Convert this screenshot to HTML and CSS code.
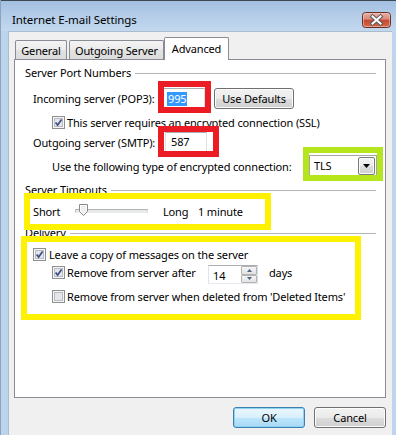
FILE: index.html
```html
<!DOCTYPE html>
<html>
<head>
<meta charset="utf-8">
<title>Internet E-mail Settings</title>
<link rel="stylesheet" href="styles.css">
</head>
<body>
<div class="window">
  <div class="titlebar">
    <span class="title">Internet E-mail Settings</span>
    <span class="close">
      <svg width="29" height="16" viewBox="0 0 29 16">
        <defs>
          <linearGradient id="closeg" x1="0" y1="0" x2="0" y2="1">
            <stop offset="0" stop-color="#e9b1a6"/>
            <stop offset="0.45" stop-color="#d98a7b"/>
            <stop offset="0.5" stop-color="#c4472f"/>
            <stop offset="1" stop-color="#d36a4d"/>
          </linearGradient>
        </defs>
        <rect x="0.5" y="0.5" width="28" height="15" rx="3" fill="url(#closeg)" stroke="#6a2e25"/>
        <rect x="1.5" y="1.5" width="26" height="13" rx="2" fill="none" stroke="#f3cfc6" stroke-opacity="0.55"/>
        <path d="M10.5 4.5 L18.5 11.5 M18.5 4.5 L10.5 11.5" stroke="#5a5a5a" stroke-width="4" stroke-linecap="square"/>
        <path d="M10.5 4.5 L18.5 11.5 M18.5 4.5 L10.5 11.5" stroke="#ffffff" stroke-width="2" stroke-linecap="square"/>
      </svg>
    </span>
  </div>
  <div class="client">
    <div class="tabs">
      <div class="tab t-general">General</div>
      <div class="tab t-outgoing">Outgoing Server</div>
      <div class="tab t-advanced">Advanced</div>
    </div>
    <div class="panel">
      <div class="group">Server Port Numbers</div>
      <div class="row r-in">
        <span class="lbl lbl-in">Incoming server (POP3):</span>
        <span class="edit e-in"><span class="sel">995</span></span>
        <span class="btn b-defaults">Use Defaults</span>
      </div>
      <div class="row r-ssl">
        <span class="chk">
          <svg width="13" height="13" viewBox="0 0 13 13"><rect x="0.5" y="0.5" width="12" height="12" fill="#f6f6f6" stroke="#8e8f8f"/><rect x="2.5" y="2.5" width="8" height="8" fill="#e4e6e9" stroke="#b9bdc3"/><path d="M3.6 6.4 L5.6 9 L9.6 3.4" stroke="#3d4f86" stroke-width="1.7" fill="none"/></svg>
        </span>
        <span class="txt">This server requires an encrypted connection (SSL)</span>
      </div>
      <div class="row r-out">
        <span class="lbl lbl-out">Outgoing server (SMTP):</span>
        <span class="edit e-out">587</span>
      </div>
      <div class="row r-enc">
        <span class="lbl lbl-enc">Use the following type of encrypted connection:</span>
        <span class="combo">
          <span class="combo-val">TLS</span>
          <span class="combo-btn">
            <svg width="7" height="4" viewBox="0 0 7 4"><path d="M0 0 H7 L3.5 4 Z" fill="#000"/></svg>
          </span>
        </span>
      </div>
      <div class="group g-time">Server Timeouts</div>
      <div class="row r-time">
        <span class="lbl lbl-short">Short</span>
        <span class="slider">
          <span class="track"></span>
          <span class="thumb">
            <svg width="9" height="12" viewBox="0 0 9 12"><path d="M0.5 0.5 H8.5 V7.5 L4.5 11.5 L0.5 7.5 Z" fill="#eeeeee" stroke="#8a8a8a"/><path d="M1.5 1.5 H7.5 V7 L4.5 10 L1.5 7 Z" fill="none" stroke="#ffffff"/></svg>
          </span>
        </span>
        <span class="lbl lbl-long">Long</span>
        <span class="txt">1 minute</span>
      </div>
      <div class="group g-deliv">Delivery</div>
      <div class="row r-leave">
        <span class="chk">
          <svg width="13" height="13" viewBox="0 0 13 13"><rect x="0.5" y="0.5" width="12" height="12" fill="#f6f6f6" stroke="#8e8f8f"/><rect x="2.5" y="2.5" width="8" height="8" fill="#e4e6e9" stroke="#b9bdc3"/><path d="M3.6 6.4 L5.6 9 L9.6 3.4" stroke="#3d4f86" stroke-width="1.7" fill="none"/></svg>
        </span>
        <span class="txt t-leave">Leave a copy of messages on the server</span>
      </div>
      <div class="row r-after">
        <span class="chk">
          <svg width="13" height="13" viewBox="0 0 13 13"><rect x="0.5" y="0.5" width="12" height="12" fill="#f6f6f6" stroke="#8e8f8f"/><rect x="2.5" y="2.5" width="8" height="8" fill="#e4e6e9" stroke="#b9bdc3"/><path d="M3.6 6.4 L5.6 9 L9.6 3.4" stroke="#3d4f86" stroke-width="1.7" fill="none"/></svg>
        </span>
        <span class="txt t-after">Remove from server after</span>
        <span class="spin">
          <span class="spin-val">14</span>
          <span class="spin-btns">
            <span class="spin-btn"><svg width="5" height="3" viewBox="0 0 5 3"><path d="M0 3 H5 L2.5 0 Z" fill="#4f6289"/></svg></span>
            <span class="spin-btn"><svg width="5" height="3" viewBox="0 0 5 3"><path d="M0 0 H5 L2.5 3 Z" fill="#4f6289"/></svg></span>
          </span>
        </span>
        <span class="txt t-days">days</span>
      </div>
      <div class="row r-del">
        <span class="chk">
          <svg width="13" height="13" viewBox="0 0 13 13"><rect x="0.5" y="0.5" width="12" height="12" fill="#f6f6f6" stroke="#8e8f8f"/><rect x="2.5" y="2.5" width="8" height="8" fill="#e4e6e9" stroke="#b9bdc3"/></svg>
        </span>
        <span class="txt">Remove from server when deleted from 'Deleted Items'</span>
      </div>
    </div>
    <div class="footer">
      <span class="btn b-ok">OK</span>
      <span class="btn b-cancel">Cancel</span>
    </div>
  </div>
  <div class="mark red m-red1"></div>
  <div class="mark red m-red2"></div>
  <div class="mark green m-green"></div>
  <div class="mark yellow m-yellow1"></div>
  <div class="mark yellow m-yellow2"></div>
</div>
</body>
</html>
```

FILE: styles.css
```css
* { box-sizing: border-box; }

html, body {
  margin: 0;
  padding: 0;
}

body {
  width: 396px;
  height: 435px;
  overflow: hidden;
  font-family: "Noto Sans", "Open Sans", sans-serif;
  font-size: 11px;
  letter-spacing: -0.15px;
  color: #000;
  background: #c4d9ef;
}

.window {
  position: relative;
  width: 396px;
  height: 435px;
  display: flex;
  flex-direction: column;
  background: linear-gradient(to right, #bcd3ec, #c8dcf1 60%, #bfd5ee);
  border-left: 1px solid #8ea3bb;
}

/* ---------- title bar ---------- */
.titlebar {
  height: 31px;
  flex: none;
  display: flex;
  align-items: flex-start;
  border-top: 1px solid #3e4754;
  background: linear-gradient(to bottom, #a3c0e2 0%, #b6cee9 55%, #c3d8ef 100%);
}

.title {
  margin-top: 11px;
  padding-left: 11px;
  line-height: 16px;
  font-size: 11.5px;
  letter-spacing: -0.1px;
  color: #000;
}

.close {
  margin-left: auto;
  margin-right: 5px;
  margin-top: 11px;
  width: 29px;
  height: 16px;
  display: block;
}
.close svg { display: block; }

/* ---------- client ---------- */
.client {
  flex: 1;
  margin-left: 7px;
  margin-right: 4px;
  background: #f0f0f0;
  border-left: 1px solid #a9bcd0;
  border-top: 1px solid #a9bcd0;
  padding: 5px 6px 0 5px;
  display: flex;
  flex-direction: column;
}

.tabs {
  height: 22px;
  flex: none;
  display: flex;
  align-items: flex-end;
  padding-left: 1px;
  position: relative;
  z-index: 1;
}

.tab {
  height: 19px;
  display: flex;
  align-items: center;
  justify-content: center;
  border: 1px solid #898c95;
  border-bottom: none;
  border-radius: 2px 2px 0 0;
  background: linear-gradient(to bottom, #f3f3f3 0%, #ebebeb 50%, #e2e2e2 51%, #dcdcdc 100%);
  line-height: 15px;
}

.t-general { width: 52px; margin-right: 2px; }
.t-outgoing { width: 95px; margin-right: 0; }
.t-advanced {
  width: 65px;
  height: 23px;
  margin-bottom: -1px;
  background: #ffffff;
  padding-bottom: 2px;
}

.panel {
  height: 339px;
  flex: none;
  border: 1px solid #898c95;
  background: #ffffff;
  padding-top: 6px;
}

.group {
  display: flex;
  align-items: center;
  height: 14px;
  line-height: 14px;
  padding-left: 10px;
  padding-right: 9px;
  white-space: nowrap;
}
.group::after {
  content: "";
  flex: 1;
  height: 1px;
  margin-left: 4px;
  background: #b4b4b4;
}
.g-time { margin-top: 6px; }
.g-deliv { margin-top: 7px; }

.row {
  display: flex;
  align-items: center;
  white-space: nowrap;
}

.lbl, .txt { line-height: 15px; }

.chk { width: 13px; height: 13px; flex: none; display: block; }
.chk svg { display: block; }

/* incoming */
.r-in { margin-top: 8px; height: 21px; padding-left: 18px; }
.lbl-in { width: 130px; }
.edit {
  height: 21px;
  width: 42px;
  border: 1px solid;
  border-color: #abadb3 #dbdfe6 #e3e9ef #e2e3ea;
  background: #fff;
  display: flex;
  align-items: center;
  line-height: 14px;
}
.e-in { padding-left: 3px; }
.sel {
  background: #3399ff;
  color: #fff;
  padding: 0 1px;
}
.b-defaults {
  margin-left: 9px;
  width: 80px;
  height: 21px;
}

/* ssl */
.r-ssl { margin-top: 7px; height: 13px; padding-left: 37px; }
.r-ssl .txt { margin-left: 2px; }

/* outgoing */
.r-out { margin-top: 3px; height: 20px; padding-left: 18px; }
.lbl-out { width: 132px; }
.e-out { height: 20px; padding-left: 5px; }

/* encryption */
.r-enc { margin-top: 3px; height: 22px; padding-left: 37px; }
.lbl-enc { width: 257px; }
.combo {
  width: 68px;
  height: 22px;
  border: 1px solid #a5a5a5;
  background: #fff;
  display: flex;
  align-items: center;
  padding-left: 4px;
  padding-right: 1px;
}
.combo-val { line-height: 14px; }
.combo-btn {
  margin-left: auto;
  width: 17px;
  height: 18px;
  border: 1px solid #7b7b7b;
  border-radius: 2px;
  background: linear-gradient(to bottom, #f2f2f2 0%, #ebebeb 50%, #dddddd 51%, #cfcfcf 100%);
  box-shadow: inset 0 0 0 1px #fafafa;
  display: flex;
  align-items: center;
  justify-content: center;
}
.combo-btn svg { display: block; }

/* timeout */
.r-time { margin-top: 6px; height: 16px; padding-left: 18px; }
.lbl-short { width: 42px; }
.slider {
  position: relative;
  width: 73px;
  height: 16px;
  margin-right: 15px;
  display: flex;
  align-items: center;
}
.track {
  display: block;
  width: 73px;
  height: 4px;
  border: 1px solid;
  border-color: #b2b2b2 #d6d6d6 #ececec #c4c4c4;
  background: #e7eaea;
  margin-top: -1px;
}
.thumb {
  position: absolute;
  left: 4px;
  top: 1px;
  width: 9px;
  height: 12px;
}
.thumb svg { display: block; }
.lbl-long { width: 35px; }

/* delivery */
.r-leave { margin-top: 8px; height: 13px; padding-left: 18px; }
.t-leave { margin-left: 3px; }

.r-after {
  margin-top: 4px;
  height: 19px;
  padding-left: 37px;
  align-items: flex-start;
}
.r-after .chk { margin-top: 1px; }
.t-after { margin-left: 2px; width: 141px; }
.spin {
  width: 50px;
  height: 19px;
  border: 1px solid;
  border-color: #abadb3 #dbdfe6 #e3e9ef #e2e3ea;
  background: #fff;
  display: flex;
  align-items: center;
  padding-left: 4px;
}
.spin-val { line-height: 14px; margin-top: 2px; }
.spin-btns {
  margin-left: auto;
  width: 16px;
  height: 17px;
  display: flex;
  flex-direction: column;
}
.spin-btn {
  flex: 1;
  border: 1px solid #b3b3b3;
  border-radius: 1px;
  background: linear-gradient(to bottom, #f6f6f6, #e2e2e2);
  display: flex;
  align-items: center;
  justify-content: center;
}
.spin-btn svg { display: block; }
.t-days { margin-left: 11px; }

.r-del { margin-top: 6px; height: 13px; padding-left: 37px; }
.r-del .txt { margin-left: 2px; }

/* ---------- buttons ---------- */
.btn {
  display: flex;
  align-items: center;
  justify-content: center;
  border: 1px solid #707070;
  border-radius: 3px;
  background: linear-gradient(to bottom, #f2f2f2 0%, #ebebeb 50%, #dddddd 51%, #cfcfcf 100%);
  box-shadow: inset 0 0 0 1px #fcfcfc;
  line-height: 14px;
  color: #000;
}

.footer {
  margin-top: 9px;
  display: flex;
  justify-content: flex-end;
  gap: 9px;
}
.footer .btn { width: 72px; height: 21px; }
.b-ok {
  border-color: #3c7fb1;
  background: linear-gradient(to bottom, #eaf6fd 0%, #d9f0fc 50%, #bee6fd 51%, #a7d9f5 100%);
  box-shadow: inset 0 0 0 1px #8fd3f4;
}

/* ---------- annotation marks ---------- */
.mark {
  position: absolute;
  border: 6px solid;
  pointer-events: none;
}
.red { border-color: #ec1c24; }
.green { border-color: #b5e61d; }
.yellow { border-color: #fff200; }

.m-red1 { left: 157px; top: 81px; width: 53px; height: 32px; }
.m-red2 { left: 157px; top: 126px; width: 61px; height: 31px; }
.m-green { left: 302px; top: 147px; width: 80px; height: 34px; }
.m-yellow1 { left: 23px; top: 193px; width: 247px; height: 37px; }
.m-yellow2 { left: 20px; top: 236px; width: 340px; height: 84px; }
```
